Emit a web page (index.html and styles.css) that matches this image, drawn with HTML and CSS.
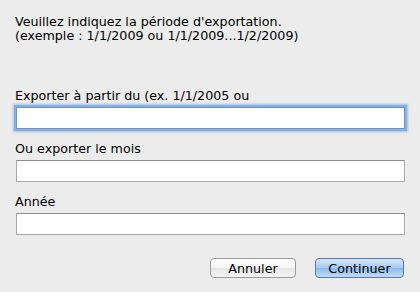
FILE: index.html
```html
<!DOCTYPE html>
<html lang="fr">
<head>
  <meta charset="UTF-8" />
  <title>Exportation</title>
  <link rel="stylesheet" href="styles.css">
</head>
<body>
  <div class="dialog">
    <p class="intro">Veuillez indiquez la période d'exportation.<br>(exemple : 1/1/2009 ou 1/1/2009...1/2/2009)</p>

    <div class="fields">
      <label class="field">
        <span class="label">Exporter à partir du (ex. 1/1/2005 ou</span>
        <input type="text" class="input focused">
      </label>
      <label class="field">
        <span class="label">Ou exporter le mois</span>
        <input type="text" class="input">
      </label>
      <label class="field">
        <span class="label">Année</span>
        <input type="text" class="input">
      </label>
    </div>

    <div class="buttons">
      <button class="btn">Annuler</button>
      <button class="btn primary">Continuer</button>
    </div>
  </div>
</body>
</html>
```

FILE: styles.css
```css
* {
  box-sizing: border-box;
  margin: 0;
  padding: 0;
}
body {
  background-color: #ececec;
  font-family: "DejaVu Sans", "Liberation Sans", sans-serif;
  font-size: 12.7px;
  color: #000;
  width: 420px;
  height: 292px;
}
.dialog {
  padding: 15px 15px 0 16px;
}
.intro {
  line-height: 14px;
  margin-left: -1px;
}
.fields {
  margin-top: 45px;
  display: flex;
  flex-direction: column;
  gap: 12px;
}
.field {
  display: flex;
  flex-direction: column;
}
.label {
  line-height: 15px;
  margin-left: -1px;
  margin-bottom: 4px;
}
.input {
  width: 389px;
  height: 22px;
  border: 1px solid #a9a9a9;
  border-top-color: #8e8e8e;
  background: #fff;
  outline: none;
}
.input.focused {
  border-color: #6a93c9;
  box-shadow: 0 0 0 2px #89b1e0, 0 0 2px 3px rgba(120, 160, 215, 0.6);
}
.buttons {
  margin-top: 23px;
  display: flex;
  justify-content: flex-end;
  gap: 19px;
  padding-right: 1px;
}
.btn {
  width: 86px;
  height: 20px;
  font-family: "DejaVu Sans", "Liberation Sans", sans-serif;
  font-size: 12.7px;
  color: #000;
  border: 1px solid #9a9a9a;
  border-radius: 4px;
  background: linear-gradient(#ffffff, #f3f3f3 50%, #e6e6e6 51%, #f5f5f5);
}
.btn.primary {
  width: 89px;
  border-color: #5479b0;
  background: linear-gradient(#d6e6f8, #a9caf0 50%, #8fb9ec 51%, #c3dcf8);
}
```
